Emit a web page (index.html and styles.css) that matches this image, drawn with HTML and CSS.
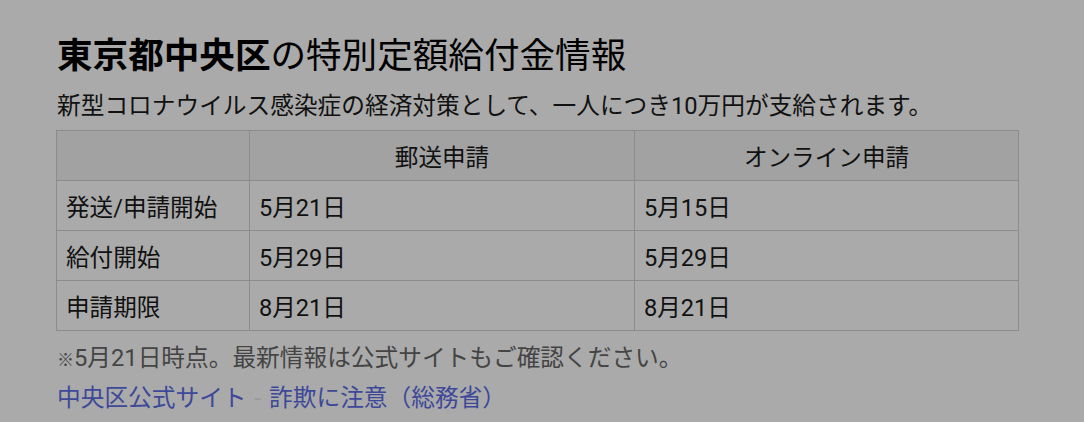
FILE: index.html
```html
<!DOCTYPE html>
<html lang="ja">
<head>
<meta charset="utf-8">
<link rel="stylesheet" href="styles.css">
</head>
<body>
<main class="card">
  <h1 class="title"><strong>東京都中央区</strong>の特別定額給付金情報</h1>
  <p class="lead">新型コロナウイルス感染症の経済対策として、一人につき10万円が支給されます。</p>
  <table class="info">
    <thead>
      <tr><th class="c1"></th><th class="c2">郵送申請</th><th class="c3">オンライン申請</th></tr>
    </thead>
    <tbody>
      <tr><td>発送/申請開始</td><td>5月21日</td><td>5月15日</td></tr>
      <tr><td>給付開始</td><td>5月29日</td><td>5月29日</td></tr>
      <tr><td>申請期限</td><td>8月21日</td><td>8月21日</td></tr>
    </tbody>
  </table>
  <p class="note"><span class="mark">※</span>5月21日時点。最新情報は公式サイトもご確認ください。</p>
  <p class="links"><a href="#">中央区公式サイト</a><span class="sep">-</span><a href="#">詐欺に注意（総務省）</a></p>
</main>
</body>
</html>
```
FILE: styles.css
```css
html, body {
  margin: 0;
  padding: 0;
  background: #aaaaaa;
}
body {
  font-family: Roboto, "Noto Sans CJK JP", sans-serif;
  color: #111111;
}
.card {
  padding: 30px 0 0 57px;
  width: 961px;
}
.title {
  margin: 0;
  font-size: 35.6px;
  line-height: 52px;
  font-weight: 400;
  color: #000;
}
.title strong {
  font-weight: 700;
}
.lead {
  margin: 7px 0 0;
  font-size: 23.7px;
  line-height: 34px;
  color: #111;
}
.info {
  margin-top: 7px;
  width: 962px;
  margin-left: -1px;
  border-collapse: collapse;
  table-layout: fixed;
  font-size: 23.6px;
}
.info th, .info td {
  border: 1px solid #8c8c8c;
  height: 49px;
  padding: 0 0 0 9px;
  text-align: left;
  font-weight: 400;
  color: #111;
}
.info th {
  background: #a2a2a2;
  text-align: center;
  padding: 0;
}
.c1 { width: 192px; }
.c2 { width: 384px; }
.c3 { width: 383px; }
.note {
  margin: 10px 0 0;
  font-size: 23.7px;
  line-height: 34px;
  color: #444;
}
.mark {
  font-size: 17px;
}
.links {
  margin: 4px 0 0;
  font-size: 23.7px;
  line-height: 34px;
}
.links a {
  color: #3d4899;
  text-decoration: none;
}
.sep {
  color: #999;
  margin: 0 8px;
}
```
